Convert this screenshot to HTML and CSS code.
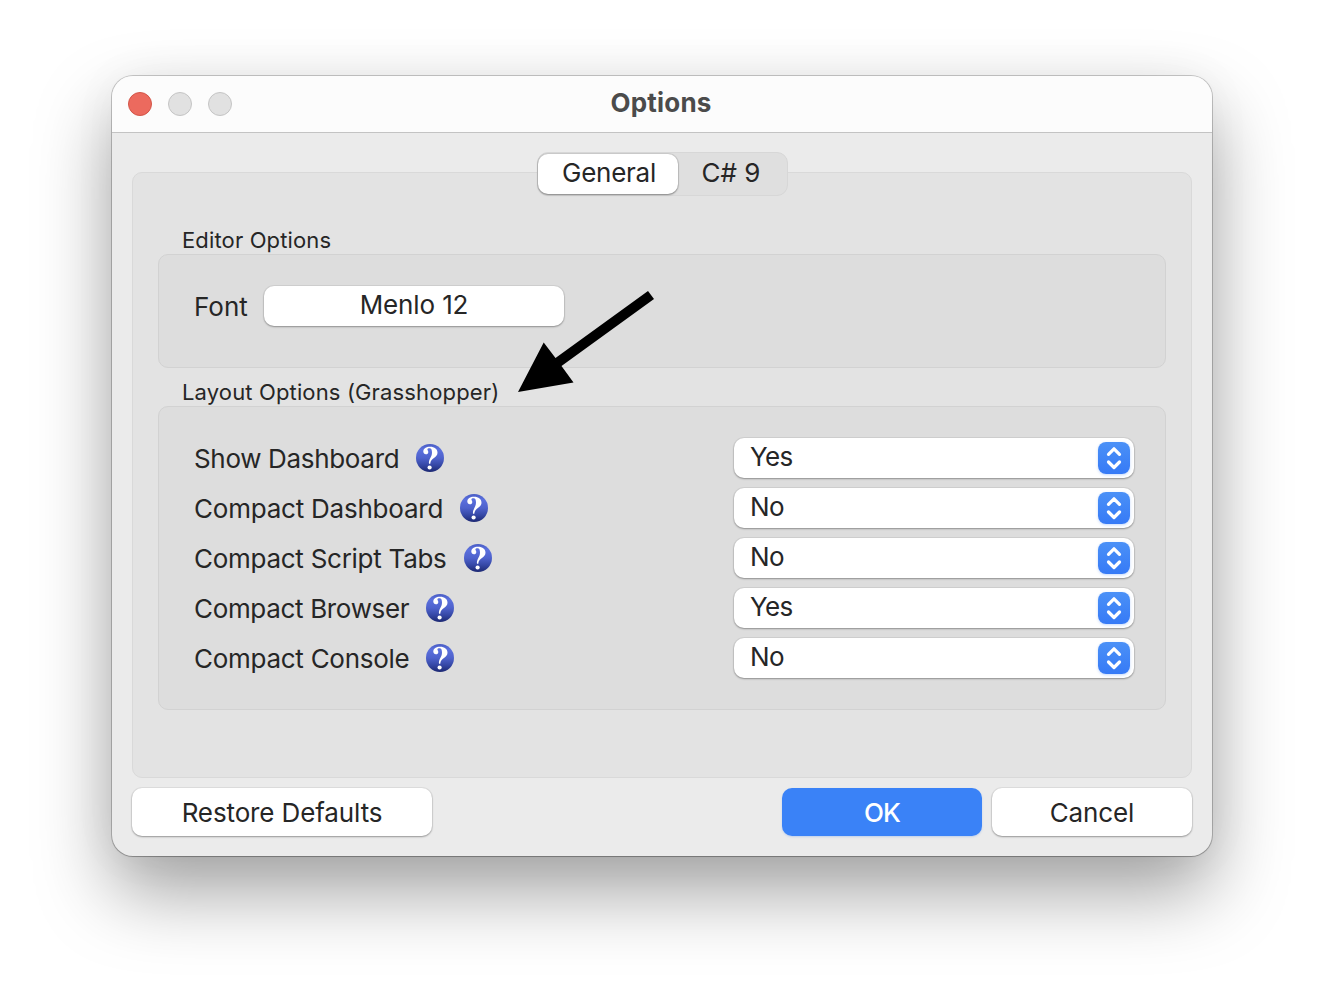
FILE: index.html
```html
<!DOCTYPE html>
<html lang="en">
<head>
<meta charset="utf-8">
<title>Options</title>
<link rel="stylesheet" href="styles.css">
</head>
<body>
<svg class="defs" width="0" height="0" aria-hidden="true">
  <defs>
    <linearGradient id="help-fill" x1="0" y1="0" x2="0" y2="1">
      <stop offset="0" stop-color="#4a5dc4"/>
      <stop offset=".2" stop-color="#5b70de"/>
      <stop offset=".5" stop-color="#4e62cc"/>
      <stop offset=".75" stop-color="#3648a6"/>
      <stop offset="1" stop-color="#1c2872"/>
    </linearGradient>
    <symbol id="help" viewBox="0 0 28 28">
      <circle cx="14" cy="14" r="14" fill="url(#help-fill)"/>
      <path d="M13 19.8C12.300 15.600 16 13.200 16 8.500C16 5.600 15.200 4.200 13.600 4.200C12.200 4.200 11.400 4.700 11.400 5.400C11.400 6.200 12.300 6.700 12.300 8C12.300 9.400 11.300 10.300 9.900 10.300C8.400 10.300 7.300 9.200 7.300 7.600C7.300 4.800 10.200 2.800 14 2.800C18.600 2.800 21.500 5.200 21.500 8.800C21.500 13.700 14.500 14.100 14.300 19.800Z" fill="#fff"/>
      <circle cx="13.600" cy="23.500" r="2.100" fill="#fff"/>
    </symbol>
    <symbol id="chevrons" viewBox="0 0 32 32">
      <path d="M10.500 12.300L16 6.800L21.500 12.300M10.500 20L16 25.500L21.500 20" fill="none" stroke="#fff" stroke-width="3.200" stroke-linecap="round" stroke-linejoin="round"/>
    </symbol>
  </defs>
</svg>
<main class="window">
  <header class="titlebar">
    <div class="lights"><span class="light close"></span><span class="light"></span><span class="light"></span></div>
    <h1 class="title">Options</h1>
  </header>
  <div class="content">
    <nav class="tabs"><span class="tab active">General</span><span class="tab second">C# 9</span></nav>
    <section class="panel">
      <h2 class="group-title">Editor Options</h2>
      <div class="group editor">
        <span class="label font-label">Font</span>
        <button class="button font-button">Menlo 12</button>
      </div>
      <h2 class="group-title layout-title">Layout Options (Grasshopper)</h2>
      <div class="group layout">
        <div class="row"><span class="label snug">Show Dashboard</span><svg class="help"><use href="#help"/></svg><div class="select"><span>Yes</span><svg class="stepper"><use href="#chevrons"/></svg></div></div>
        <div class="row"><span class="label loose">Compact Dashboard</span><svg class="help"><use href="#help"/></svg><div class="select"><span>No</span><svg class="stepper"><use href="#chevrons"/></svg></div></div>
        <div class="row"><span class="label">Compact Script Tabs</span><svg class="help"><use href="#help"/></svg><div class="select"><span>No</span><svg class="stepper"><use href="#chevrons"/></svg></div></div>
        <div class="row"><span class="label snug">Compact Browser</span><svg class="help"><use href="#help"/></svg><div class="select"><span>Yes</span><svg class="stepper"><use href="#chevrons"/></svg></div></div>
        <div class="row"><span class="label">Compact Console</span><svg class="help"><use href="#help"/></svg><div class="select"><span>No</span><svg class="stepper"><use href="#chevrons"/></svg></div></div>
      </div>
    </section>
    <footer class="actions">
      <button class="button restore">Restore Defaults</button>
      <button class="button ok">OK</button>
      <button class="button cancel">Cancel</button>
    </footer>
  </div>
  <svg class="arrow" viewBox="0 0 138 102"><path d="M0 101L25.700 51.500L37.500 67L130 0L136 8L43.500 75L55.500 91.500Z"/></svg>
</main>
</body>
</html>
```
FILE: styles.css
```css
* { box-sizing: border-box; }
body {
  margin: 0;
  padding: 76px 112px;
  height: 1004px;
  overflow: hidden;
  background: #fff;
  color: #262626;
  font: 26px/32px Inter, "Liberation Sans", sans-serif;
}
.defs { position: absolute; }
h1, h2 { margin: 0; }
.window {
  position: relative;
  width: 1100px;
  height: 780px;
  border-radius: 21px;
  background: #ebebeb;
  box-shadow: 0 0 0 1px rgba(0,0,0,.2), 0 1px 1px rgba(0,0,0,.15), 0 36px 76px rgba(0,0,0,.37), 0 0 50px rgba(0,0,0,.04);
}
.titlebar {
  display: grid;
  grid-template-columns: 1fr auto 1fr;
  align-items: center;
  height: 57px;
  padding: 0 18px 0 16px;
  background: #fcfcfc;
  border-bottom: 1px solid #c3c3c3;
  border-radius: 21px 21px 0 0;
}
.lights { display: flex; gap: 16px; }
.light {
  width: 24px;
  height: 24px;
  border: 1px solid #c5c5c5;
  border-radius: 50%;
  background: #e1e1e1;
}
.close { background: #ec6a5e; border-color: #d35548; }
.title { font-size: 26px; font-weight: 700; letter-spacing: .2px; color: #4b4b4b; margin-top: -2px; }
.content { padding: 19px 20px 20px; }
.tabs {
  position: relative;
  display: flex;
  width: 251px;
  height: 44px;
  margin: 0 auto -24px;
  border: 1px solid #d7d7d7;
  border-radius: 11px;
  background: #dfdfdf;
}
.tab { display: flex; justify-content: center; align-items: center; height: 40px; padding-bottom: 2px; }
.active { width: 140px; margin-top: 1px; padding-left: 3px; border-radius: 10px; background: #fff; letter-spacing: -.25px; box-shadow: 0 0 0 1px rgba(0,0,0,.08), 0 1px 2px rgba(0,0,0,.35); }
.second { width: 107px; margin-top: 1px; }
.panel {
  height: 606px;
  padding: 54px 25px 0;
  border: 1px solid #d9d9d9;
  border-radius: 10px;
  background: #e3e3e3;
}
.group-title { height: 27px; padding-left: 24px; font-size: 22px; line-height: 26px; font-weight: 400; letter-spacing: .14px; }
.group { border: 1px solid #d2d2d2; border-radius: 10px; background: #ddd; }
.editor { display: flex; align-items: flex-start; height: 114px; padding: 31px 35px; }
.font-label { width: 70px; padding-top: 5px; }
.layout-title { margin-top: 11px; }
.layout { display: flex; flex-direction: column; gap: 10px; height: 304px; padding: 31px 31px 0 35px; }
.row { display: flex; align-items: center; height: 40px; }
.row .label { padding-top: 2px; margin-right: 17px; letter-spacing: -.27px; }
.row .snug { letter-spacing: -.33px; }
.row .loose { letter-spacing: -.22px; }
.help { width: 28px; height: 28px; }
.button, .select { border: 0; background: #fff; box-shadow: 0 0 0 1px rgba(0,0,0,.05), 0 1px 2px rgba(0,0,0,.32); }
.button { padding: 0; border-radius: 10px; color: inherit; font: inherit; letter-spacing: -.12px; }
.font-button { width: 300px; height: 40px; padding-bottom: 2px; }
.select { display: flex; align-items: center; justify-content: space-between; width: 400px; height: 40px; margin-left: auto; padding: 0 4px 0 16px; border-radius: 10px; letter-spacing: -.6px; }
.select span { padding-bottom: 2px; }
.stepper { width: 32px; height: 32px; border-radius: 8px; background: linear-gradient(#4b91f7, #367af6); box-shadow: 0 1px 3px rgba(55,125,245,.3); }
.actions { display: flex; gap: 10px; padding-top: 10px; }
.actions .button { width: 200px; height: 48px; padding-top: 1px; }
.actions .restore { width: 300px; margin-right: auto; }
.actions .ok { background: #3a82f7; color: #fff; font-weight: 500; letter-spacing: -.8px; box-shadow: 0 1px 2px rgba(58,130,247,.25); }
.arrow { position: absolute; left: 406px; top: 215px; width: 138px; height: 102px; }
```
